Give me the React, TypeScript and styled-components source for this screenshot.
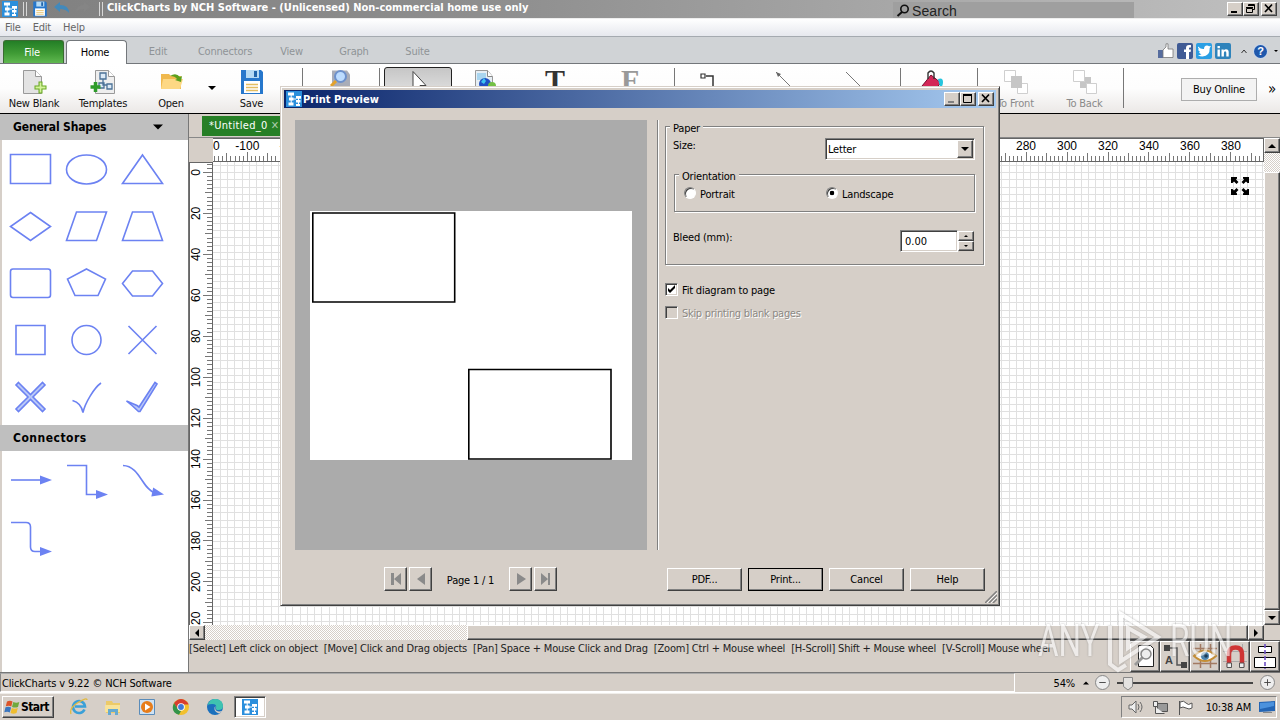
import React from "react";
import styled, { createGlobalStyle, css } from "styled-components";

const Color = {
  Face: "#d6cfc8",
  Shadow: "#808080",
  Dark: "#404040",
  Light: "#ffffff",
  Stroke: "#6c82f2",
  Green: "#267f26",
};

const raised = css`
  border: 1px solid;
  border-color: #fff #404040 #404040 #fff;
  box-shadow: inset -1px -1px 0 #808080;
  background: ${Color.Face};
`;

const sunken = css`
  border: 1px solid;
  border-color: #808080 #fff #fff #808080;
  box-shadow: inset 1px 1px 0 #404040, inset -1px -1px 0 #d6cfc8;
`;

const dither = css`
  background: repeating-conic-gradient(#fff 0 25%, #d6cfc8 0 50%) 0 0 / 2px 2px;
`;

/* ---------- ruler and canvas drawing ---------- */

const rulerX = (v: number) => 34.3 + (v + 100) * 2.0493;
const rulerY = (v: number) => 10.5 + v * 2.047;

const HorizontalRuler = () => {
  const ticks: React.ReactNode[] = [];
  for (let v = -116; v <= 395; v += 2) {
    const x = Math.floor(rulerX(v)) + 0.5;
    const top = v % 20 === 0 ? 14 : v % 10 === 0 ? 15 : 18;
    ticks.push(<path key={v} d={`M${x} ${top}V23`} stroke="#777" />);
  }
  const labels: React.ReactNode[] = [];
  for (let v = -100; v <= 380; v += 20) {
    if (v > -80 && v < 280) continue;
    labels.push(
      <text key={v} x={rulerX(v)} y={12} textAnchor="middle">
        {v}
      </text>
    );
  }
  return (
    <RulerSvg width="1051" height="24">
      {ticks}
      <text x="0" y="12">0</text>
      {labels}
      <path d="M0 .5H1051M0 23.5H1051M1050.5 0V24" stroke="#666" />
    </RulerSvg>
  );
};

const VerticalRuler = () => {
  const ticks: React.ReactNode[] = [];
  for (let v = -4; v <= 224; v += 2) {
    const y = Math.floor(rulerY(v)) + 0.5;
    const left = v % 20 === 0 ? 14 : v % 10 === 0 ? 16 : 18;
    ticks.push(<path key={v} d={`M${left} ${y}H23`} stroke="#777" />);
  }
  const labels: React.ReactNode[] = [];
  for (let v = 0; v <= 200; v += 20) {
    labels.push(
      <text key={v} transform={`translate(11 ${rulerY(v)}) rotate(-90)`} textAnchor="middle">
        {v}
      </text>
    );
  }
  return (
    <RulerSvg width="24" height="463">
      {ticks}
      {labels}
      <text transform="translate(11 463) rotate(-90)">20</text>
      <path d="M.5 0V463M23.5 0V463M0 .5H24" stroke="#666" />
    </RulerSvg>
  );
};

const CanvasGrid = () => {
  const lines: React.ReactNode[] = [];
  for (let i = 0; i < 146; i++) {
    const x = Math.round(7 + i * 7.235) + 0.5;
    lines.push(<path key={`v${i}`} d={`M${x} 0V463`} />);
  }
  for (let i = 0; i < 64; i++) {
    const y = Math.round(3 + i * 7.235) + 0.5;
    lines.push(<path key={`h${i}`} d={`M0 ${y}H1051`} />);
  }
  return (
    <svg width="1051" height="463" stroke="#e0e0e0">
      {lines}
      <g transform="translate(1017 14)" fill="#000" stroke="none">
        <path d="M1 1h6v1.500l-1 1 2.500 2.500-2 2L4 5.500 2.500 7H1z" />
        <path d="M19 1h-6v1.500l1 1L11.500 6l2 2L16 5.500 17.500 7H19z" />
        <path d="M1 19h6v-1.500l-1-1L8.500 14l-2-2L4 14.500 2.500 13H1z" />
        <path d="M19 19h-6v-1.500l1-1-2.500-2.500 2-2 2.500 2.500 1.500-1.500H19z" />
      </g>
    </svg>
  );
};

/* ---------- shape palette ---------- */

const arrow = (x: number, y: number, angle = 0) => (
  <path
    d="M0 0L-12 -4.500V4.500Z"
    fill={Color.Stroke}
    stroke="none"
    transform={`translate(${x} ${y}) rotate(${angle})`}
  />
);

const shapes: React.ReactNode[] = [
  <path d="M8.500 14.500h40v29h-40z" />,
  <ellipse cx="28.500" cy="29.500" rx="20" ry="14.500" />,
  <path d="M28.500 15L48.500 43.500h-40z" />,
  <path d="M28.500 15.500L48.500 29.500L28.500 43.500L8.500 29.500z" />,
  <path d="M18.500 15h30l-10 28.500h-30z" />,
  <path d="M18.500 15h20l10 28.500h-40z" />,
  <rect x="8.500" y="15" width="40" height="28.500" rx="2.500" />,
  <path d="M28.500 15L47.500 25L40 41.500H17L9.500 25z" />,
  <path d="M18.500 17h20l10 12.500l-10 12.500h-20l-10-12.500z" />,
  <path d="M14 14.500h29v29h-29z" />,
  <circle cx="28.500" cy="29" r="14.500" />,
  <path d="M14.500 15l28 28M42.500 15l-28 28" />,
  <path d="M16.500 14.500L28.500 26.500L40.500 14.500L43 17L31 29L43 41L40.500 43.500L28.500 31.500L16.500 43.500L14 41L26 29L14 17z" fill="#b9c8f8" />,
  <path d="M14.500 32.500C20 34 23.500 37 25 44.500C27 35 36 20 43 15" />,
  <path d="M12.500 33L23 37.500L25 39L41 14.500L43 16L26 43.500L24.500 43.500L18 37.500z" fill="#b9c8f8" />,
];

const connectors: React.ReactNode[] = [
  <g><path d="M9 29H40" />{arrow(50, 29)}</g>,
  <g><path d="M9 14.500h19.500v29h12" />{arrow(50, 43.500)}</g>,
  <g><path d="M9 14.500C26 15 28 38 41 42" />{arrow(50, 43.500, 12)}</g>,
  <g><path d="M9 14.500h15q4.500 0 4.500 4.500v20q0 4.500 4.500 4.500h8" />{arrow(50, 43.500)}</g>,
];

/* ---------- icons ---------- */

const AppLogo = ({ size = 16 }: { size?: number }) => (
  <svg width={size} height={size} viewBox="0 0 16 16">
    <rect width="16" height="16" fill="#2b8fdc" />
    <g fill="#fff">
      <path d="M2 1.500h6v3H2zM3 6.500h4.500v3H3zM2.500 11.500h5v3h-5zM10 5h5v2.800h-5zM10 9h4.500v2.500H10zM10 13h4v2h-4z" />
      <path d="M4.700 4h1v8h-1zM12 7h1v6h-1zM7 7.500h3v1H7z" />
    </g>
  </svg>
);

const Floppy = ({ size = 26 }: { size?: number }) => (
  <svg width={size} height={size} viewBox="0 0 26 26">
    <path d="M2 1h20l2 2v22H2z" fill="#2677cc" />
    <path d="M7 1h13v8H7z" fill="#b5daf4" />
    <path d="M15 2h3v6h-3z" fill="#2165aa" />
    <path d="M5 12h16v12H5z" fill="#fff" />
    <path d="M7 15.500h12M7 18.500h12M7 21.500h12" stroke="#e3bd62" strokeWidth="1.300" />
  </svg>
);

const NewBlankIcon = () => (
  <svg width="26" height="26" viewBox="0 0 26 26">
    <path d="M2.500 1.500h12l6 6v17h-18z" fill="#e3e3e3" stroke="#999" />
    <path d="M14.500 1.500v6h6" fill="#fff" stroke="#999" />
    <path d="M19.500 12.500v12M13.500 18.500h12" stroke="#69a823" strokeWidth="4" />
    <path d="M19.500 13.500v10M14.500 18.500h10" stroke="#d3f39a" strokeWidth="1.800" />
  </svg>
);

const TemplatesIcon = () => (
  <svg width="26" height="26" viewBox="0 0 26 26">
    <path d="M5.500 1.500h13l6 6v17h-19z" fill="#eee" stroke="#999" />
    <path d="M18.500 1.500v6h6" fill="#fff" stroke="#999" />
    <g fill="#dceaf6" stroke="#4b7197" strokeWidth="1.300">
      <path d="M10 4h6v6h-6zM9 14h5v5H9zM17 15h5v5h-5zM13 10v6h4" />
    </g>
    <path d="M5.500 13v10M.500 18h10" stroke="#2f9b2b" strokeWidth="3.500" />
  </svg>
);

const OpenIcon = () => (
  <svg width="26" height="26" viewBox="0 0 26 26">
    <path d="M3 5h8l2 2h10v13H3z" fill="#f0b94e" />
    <path d="M5 10h20l-3 10H3z" fill="#fdd884" />
    <path d="M12 7q6-4 10 1l2-1-1 6-6-2 2-1q-2-3-7-3z" fill="#5aa01e" />
  </svg>
);

const PreviewIcon = () => (
  <svg width="26" height="26" viewBox="0 0 26 26">
    <path d="M4 1.500h15l3 4v16H4z" fill="#a9adb8" />
    <circle cx="12.500" cy="7.500" r="5.500" fill="#bcdcff" stroke="#6d91cc" strokeWidth="2" />
    <path d="M3 17l5-5" stroke="#e3a22c" strokeWidth="3" />
  </svg>
);

const CursorIcon = () => (
  <svg width="26" height="26" viewBox="0 0 26 26">
    <path d="M8 1.500v19l4-4 3 7 3-2-3-6h6z" fill="#fff" stroke="#444" />
  </svg>
);

const ImageIcon = () => (
  <svg width="26" height="26" viewBox="0 0 26 26">
    <path d="M3.500 1.500h12l5 6v17h-17z" fill="#e6eef4" stroke="#999" />
    <path d="M15.500 1.500v6h5" fill="#fff" stroke="#888" />
    <path d="M5 4h9v7H5z" fill="#a9d5ef" />
    <circle cx="13" cy="15" r="6" fill="#1f4fc4" />
    <path d="M9 13l3-4 2 3-2 3z" fill="#3ec4f0" />
    <circle cx="20" cy="17" r="4" fill="#73c045" />
  </svg>
);

const ConnectorIcon = () => (
  <svg width="26" height="26" viewBox="0 0 26 26" fill="none" stroke="#333" strokeWidth="1.500">
    <path d="M2 5h4v4H2z" strokeWidth="1.200" />
    <path d="M7 7h7v12h6" />
  </svg>
);

const LineIcon = () => (
  <svg width="26" height="26" viewBox="0 0 26 26" stroke="#777" fill="#666">
    <path d="M4 3l18 18" />
    <path d="M4 3l5 2-3 3z" stroke="none" />
  </svg>
);

const FillIcon = () => (
  <svg width="26" height="26" viewBox="0 0 26 26">
    <path d="M2 17L11 6l10 8-8 8z" fill="#d32757" stroke="#771030" />
    <path d="M8 10V4q3-4 6 0v6" fill="none" stroke="#333" strokeWidth="1.400" />
    <path d="M18 10q5-2 5 3t-3 5z" fill="#25c5de" />
  </svg>
);

const StackIcon = ({ front = false }: { front?: boolean }) => (
  <svg width="26" height="26" viewBox="0 0 26 26">
    {!front && <path d="M8 8h11v11H8z" fill="#c6c6c6" />}
    <path d="M1.500 1.500h11v11h-11zM14.500 14.500h10v10h-10z" fill="#fff" stroke="#cfcfcf" />
    {front && <path d="M8 7h11v12H8z" fill="#c6c6c6" />}
  </svg>
);

const MinimizeGlyph = ({ color = "#000" }: { color?: string }) => (
  <svg width="12" height="11"><path d="M2 8h6v2H2z" fill={color} /></svg>
);
const MaximizeGlyph = () => (
  <svg width="12" height="11"><path d="M1.500 2v7.500h8V2zM1 1.500h9" fill="none" stroke="#000" /><path d="M1 1h9v2H1z" /></svg>
);
const RestoreGlyph = () => (
  <svg width="12" height="11" fill="none" stroke="#000">
    <path d="M3.500 3V1.500h6v5H8M3 2.500h7M1.500 5.500h6v4h-6zM1 4.500h7" />
  </svg>
);
const CloseGlyph = () => (
  <svg width="12" height="11"><path d="M2 1.500l7 7.500M9 1.500L2 9" stroke="#000" strokeWidth="1.700" /></svg>
);

const Triangle = ({ dir, size = 4, color = "#000" }: { dir: "up" | "down" | "left" | "right"; size?: number; color?: string }) => {
  const rotate = { down: 0, left: 90, up: 180, right: 270 }[dir];
  return (
    <svg width={size * 2} height={size * 2} viewBox="0 0 8 8">
      <path d="M0 2H8L4 6Z" fill={color} transform={`rotate(${rotate} 4 4)`} />
    </svg>
  );
};

const windowButtons = (dim: boolean, middle: React.ReactNode) => (
  <>
    <CaptionButton><MinimizeGlyph color={dim ? "#808080" : "#000"} /></CaptionButton>
    <CaptionButton>{middle}</CaptionButton>
    <CaptionButton $gap><CloseGlyph /></CaptionButton>
  </>
);

/* ---------- page sections ---------- */

const AppHeader = () => (
  <>
    <TitleBar>
      <TitleIcons>
        <AppLogo />
        <Grip />
        <Floppy size={16} />
        <svg width="41" height="16" viewBox="0 0 41 16">
          <path d="M1 6l6-5v3q9 0 9 8-3-4-9-4v3z" fill="#4289bb" />
          <path d="M37 6l-6-5v3q-8 0-8 7 2-3 8-3v3z" fill="#858585" />
        </svg>
        <Grip />
      </TitleIcons>
      <TitleText>ClickCharts by NCH Software - (Unlicensed) Non-commercial home use only</TitleText>
      <SearchBox>
        <svg width="14" height="14" viewBox="0 0 14 14" fill="none" stroke="#111" strokeWidth="1.600">
          <circle cx="8.500" cy="5" r="3.700" />
          <path d="M6 8L1.500 12" strokeWidth="2" />
        </svg>
        Search
      </SearchBox>
      <CaptionGroup>{windowButtons(false, <RestoreGlyph />)}</CaptionGroup>
    </TitleBar>
    <MenuBar>
      <span>File</span>
      <span>Edit</span>
      <span>Help</span>
    </MenuBar>
    <TabBar>
      <FileTab>File</FileTab>
      <HomeTab>Home</HomeTab>
      <PlainTab $w={62}>Edit</PlainTab>
      <PlainTab $w={72}>Connectors</PlainTab>
      <PlainTab $w={61}>View</PlainTab>
      <PlainTab $w={64}>Graph</PlainTab>
      <PlainTab $w={63}>Suite</PlainTab>
      <SocialRow>
        <svg width="17" height="16" viewBox="0 0 17 16">
          <path d="M1 7h5v8H1z" fill="#566c9e" />
          <path d="M6 7l3-3V.8h2V6h5v8.500H6z" fill="#fff" stroke="#777" strokeWidth=".8" />
        </svg>
        <Badge $bg="#3f5a94">
          <path d="M9 16V9H7V6.500h2V5q0-3 3-3h2v2.500h-1.300Q12 4.500 12 5.400v1.100h2L13.600 9H12v7z" fill="#fff" />
        </Badge>
        <Badge $bg="#2a9fe4">
          <path d="M2 3.500Q5 6.500 8 6q0-3.500 3-3.500 1.300 0 2 .8L15 3l-1.300 2Q14 13 6.500 13.500 4 13.500 2 12.300q2 0 3.500-1Q3.500 11 3 9h1.200Q2 8 2.200 6l1 .3Q1.500 5 2 3.500z" fill="#fff" />
        </Badge>
        <Badge $bg="#2f83bb">
          <path d="M2.500 6.500h2.400v7H2.500zM2.500 3h2.400v2.200H2.500zM6.500 6.500h2.200v1q1-1.300 2.400-1.200 2.600 0 2.600 3v4.200h-2.400V9.800q0-1.500-1.200-1.500T8.900 10v3.500H6.500z" fill="#fff" />
        </Badge>
        <Caret width="6" height="5"><path d="M.5 4L3 1L5.500 4" fill="none" stroke="#333" /></Caret>
        <HelpDot>?</HelpDot>
        <Triangle dir="down" size={2} />
      </SocialRow>
    </TabBar>
    <Toolbar>
      <Tool $w={68}><NewBlankIcon />New Blank</Tool>
      <Tool $w={70}><TemplatesIcon />Templates</Tool>
      <Tool $w={66}><OpenIcon />Open</Tool>
      <DropArrow><Triangle dir="down" size={4} /></DropArrow>
      <Tool $w={63}><Floppy />Save</Tool>
      <ToolSeparator $before={19} />
      <Tool $w={76}><PreviewIcon /></Tool>
      <ToolSeparator />
      <ActiveTool><CursorIcon /></ActiveTool>
      <Tool $w={66}><ImageIcon /></Tool>
      <Tool $w={74}><SerifGlyph>T</SerifGlyph></Tool>
      <Tool $w={76}><SerifGlyph $dim>F</SerifGlyph></Tool>
      <ToolSeparator $before={6} />
      <Tool $w={73}><ConnectorIcon /></Tool>
      <Tool $w={74}><LineIcon /></Tool>
      <Tool $w={66}><svg width="26" height="26"><path d="M4 3l18 18" stroke="#777" /></svg></Tool>
      <ToolSeparator $before={12} />
      <Tool $w={64}><FillIcon /></Tool>
      <ToolSeparator $before={12} />
      <Tool $w={75} $dim><StackIcon front />To Front</Tool>
      <Tool $w={63} $dim><StackIcon />To Back</Tool>
      <ToolSeparator $before={7} />
      <BuyButton>Buy Online</BuyButton>
      <More>»</More>
    </Toolbar>
  </>
);

const Palette = () => (
  <Sidebar>
    <SectionHead $spacing={-0.15}>
      General Shapes
      <Triangle dir="down" size={5} />
    </SectionHead>
    <ShapeGrid>
      {shapes.map((shape, i) => (
        <ShapeCell key={i} viewBox="0 0 56 57">{shape}</ShapeCell>
      ))}
    </ShapeGrid>
    <SectionHead $spacing={0.5}>Connectors</SectionHead>
    <ShapeGrid>
      {connectors.map((shape, i) => (
        <ShapeCell key={i} viewBox="0 0 56 57">{shape}</ShapeCell>
      ))}
    </ShapeGrid>
  </Sidebar>
);

const Workspace = () => (
  <Work>
    <DocTabs>
      <DocTab>*Untitled_0<CloseMark>✕</CloseMark></DocTab>
    </DocTabs>
    <CanvasArea>
      <Corner />
      <HorizontalRuler />
      <VerticalRuler />
      <CanvasGrid />
      <VScroll>
        <ScrollButton><Triangle dir="up" /></ScrollButton>
        <VGap />
        <VThumb />
        <ScrollButton><Triangle dir="down" /></ScrollButton>
      </VScroll>
      <HScroll>
        <ScrollButton><Triangle dir="left" /></ScrollButton>
        <HGap />
        <HThumb />
        <ScrollButton><Triangle dir="right" /></ScrollButton>
      </HScroll>
    </CanvasArea>
    <HintBar>
      <Hints>
        <span>[Select] Left click on object</span>
        <span>[Move] Click and Drag objects</span>
        <span>[Pan] Space + Mouse Click and Drag</span>
        <span>[Zoom] Ctrl + Mouse wheel</span>
        <span>[H-Scroll] Shift + Mouse wheel</span>
        <span>[V-Scroll] Mouse wheel</span>
      </Hints>
      <ViewButtons>
        <ViewButton>
          <svg width="26" height="26">
            <path d="M6.500 2.500h12l3 3v18h-15z" fill="#fff" stroke="#222" />
            <path d="M3 22l8-8" stroke="#999" strokeWidth="3" />
            <circle cx="14" cy="11" r="5" fill="#eee" stroke="#888" strokeWidth="1.500" />
          </svg>
        </ViewButton>
        <ViewButton>
          <svg width="26" height="26">
            <path d="M6 5h9v17h5" fill="none" stroke="#555" strokeWidth="1.500" />
            <path d="M2 2h6v6H2zM19 19h6v6h-6z" fill="#444" />
            <text x="3" y="21" fontSize="11" fontWeight="bold" fill="#444">A</text>
          </svg>
        </ViewButton>
        <ViewButton>
          <svg width="26" height="26">
            <path d="M8.500 1v24M18.500 1v24M1 5.500h24M1 20.500h24" stroke="#a27a62" strokeWidth="1.500" />
            <path d="M2 13q11-11 22 0-11 10-22 0z" fill="#fff" stroke="#c58e35" strokeWidth="2" />
            <circle cx="13" cy="13" r="4" fill="#4e85ad" />
            <circle cx="14" cy="13" r="1.800" fill="#1d3b56" />
          </svg>
        </ViewButton>
        <ViewButton>
          <svg width="26" height="26">
            <path d="M1 8.500h24M1 18.500h24M20.500 1v24" stroke="#aaa" />
            <path d="M7 24V11Q7 4.500 13.500 4.500t6.500 6.500v13" fill="none" stroke="#cf3434" strokeWidth="4.500" />
            <path d="M5 20h4.500v4.500H5zM17.500 20H22v4.500h-4.500z" fill="#eee" stroke="#555" />
          </svg>
        </ViewButton>
        <ViewButton>
          <svg width="26" height="26">
            <path d="M6.500 3.500h13v6h-13zM2.500 14.500h21v10h-21z" fill="#fff" stroke="#000" />
            <path d="M13 1v25" stroke="#6f50c4" strokeWidth="1.600" strokeDasharray="4 2" />
          </svg>
        </ViewButton>
      </ViewButtons>
    </HintBar>
  </Work>
);

const PrintDialog = () => (
  <Dialog>
    <DialogTitle>
      <AppLogo />
      <span>Print Preview</span>
      <CaptionGroup>{windowButtons(true, <MaximizeGlyph />)}</CaptionGroup>
    </DialogTitle>
    <DialogBody>
      <PreviewPane>
        <svg width="322" height="249">
          <path d="M0 0H322V249H0z" fill="#fff" />
          <path d="M2.800 2H144.700V91H2.800zM158.800 158.500H301V248H158.800z" fill="none" stroke="#000" strokeWidth="1.600" />
        </svg>
      </PreviewPane>
      <PaneDivider />
      <Settings>
        <PaperGroup>
          <Legend>Paper</Legend>
          <SizeRow>
            <span>Size:</span>
            <SelectBox>
              Letter
              <SelectArrow><Triangle dir="down" size={4} /></SelectArrow>
            </SelectBox>
          </SizeRow>
          <OrientationGroup>
            <Legend>Orientation</Legend>
            <RadioLabel><Radio />Portrait</RadioLabel>
            <RadioLabel><Radio $on />Landscape</RadioLabel>
          </OrientationGroup>
          <BleedRow>
            <span>Bleed (mm):</span>
            <Spinner>
              <SpinnerField>0.00</SpinnerField>
              <SpinnerButtons>
                <SpinnerButton><Triangle dir="up" size={2} /></SpinnerButton>
                <SpinnerButton><Triangle dir="down" size={2} /></SpinnerButton>
              </SpinnerButtons>
            </Spinner>
          </BleedRow>
        </PaperGroup>
        <CheckRow>
          <CheckBox>
            <svg width="9" height="9"><path d="M1 3v3l2 2 5-5V0L3 5z" /></svg>
          </CheckBox>
          Fit diagram to page
        </CheckRow>
        <CheckRow $off>
          <CheckBox $off />
          Skip printing blank pages
        </CheckRow>
      </Settings>
    </DialogBody>
    <DialogFooter>
      <Pager>
        <PageButton><svg width="14" height="14" fill="#8a8a8a"><path d="M2 1h3v12H2zM12 1v12L5 7z" /></svg></PageButton>
        <PageButton><svg width="14" height="14" fill="#8a8a8a"><path d="M11 1v12L3 7z" /></svg></PageButton>
        <PageText>Page 1 / 1</PageText>
        <PageButton><svg width="14" height="14" fill="#8a8a8a"><path d="M3 1v12l9-6z" /></svg></PageButton>
        <PageButton><svg width="14" height="14" fill="#8a8a8a"><path d="M2 1v12l7-6zM9 1h2v12H9z" /></svg></PageButton>
      </Pager>
      <Actions>
        <PushButton>PDF...</PushButton>
        <PushButton $primary>Print...</PushButton>
        <PushButton>Cancel</PushButton>
        <PushButton>Help</PushButton>
      </Actions>
    </DialogFooter>
    <ResizeGrip width="12" height="12" stroke="#808080">
      <path d="M0 12L12 0M4 12L12 4M8 12L12 8" strokeWidth="1.500" />
      <path d="M2 12L12 2M6 12L12 6" stroke="#fff" strokeWidth=".8" />
    </ResizeGrip>
  </Dialog>
);

const Footer = () => (
  <>
    <StatusBar>
      <StatusText>ClickCharts v 9.22 © NCH Software</StatusText>
      <ZoomBox>
        <ZoomValue>54%</ZoomValue>
        <Triangle dir="up" size={3} />
        <ZoomDial>
          <path d="M3.500 7h7" stroke="#444" />
        </ZoomDial>
        <svg width="138" height="16">
          <path d="M1 8h136" stroke="#444" strokeWidth="2" />
          <path d="M7.500 2.500h9v9l-4.500 3.500-4.500-3.500z" fill="#e4e2e0" stroke="#888" />
        </svg>
        <ZoomDial>
          <path d="M3.500 7h7M7 3.500v7" stroke="#444" />
        </ZoomDial>
      </ZoomBox>
    </StatusBar>
    <TaskBar>
      <StartButton>
        <svg width="16" height="15" viewBox="0 0 16 15">
          <path d="M3 1.500q3-1.500 5.500 0L7.300 6.500Q5 5 1.800 6.300z" fill="#dc5428" />
          <path d="M9.300 2q3 1.500 6 0l-1.300 5q-3 1.200-6 0z" fill="#71a93c" />
          <path d="M1.500 7.300q3-1.300 5.600.3L5.800 12.500Q3.500 11 .3 12.300z" fill="#3a76bf" />
          <path d="M7.800 8q3 1.300 6 0l-1.300 5q-3 1.300-6 0z" fill="#efbd2f" />
        </svg>
        Start
      </StartButton>
      <QuickLaunch>
        <svg width="18" height="18" viewBox="0 0 18 18">
          <path d="M14.500 11.500A6 6 0 1 1 15 8.500H5" fill="none" stroke="#3aa0d8" strokeWidth="2.600" />
          <path d="M1 16Q-1 10 8 4.500T17 2" fill="none" stroke="#e3ba3e" strokeWidth="1.300" />
        </svg>
        <svg width="18" height="18" viewBox="0 0 18 18">
          <path d="M2 3h6l1 2h7v10H2z" fill="#ecca68" />
          <path d="M1 7h15v7H1z" fill="#f8e39a" />
          <path d="M4 17v-6h10v6h-3v-3H7v3z" fill="#66aad0" />
        </svg>
        <svg width="18" height="18" viewBox="0 0 18 18">
          <path d="M1.500 1.500h15v15h-15z" fill="#cfe2f3" stroke="#5a8cba" />
          <circle cx="9" cy="9" r="6" fill="#e77d1b" />
          <path d="M7 5.500v7L12.500 9z" fill="#fff" />
        </svg>
        <svg width="18" height="18" viewBox="0 0 18 18">
          <circle cx="9" cy="9" r="8" fill="#f2c02d" />
          <path d="M2 5Q9-3 16 5L16.500 6.500H9L5.500 11z" fill="#d83d2f" />
          <path d="M2 5L6.500 12L9 13L7 16.800Q-2 14 2 5z" fill="#33944a" />
          <circle cx="9" cy="9" r="3.800" fill="#fff" />
          <circle cx="9" cy="9" r="2.900" fill="#3f79d8" />
        </svg>
        <svg width="18" height="18" viewBox="0 0 18 18">
          <circle cx="9" cy="9" r="8" fill="#1b70bd" />
          <path d="M1.500 7Q4 0 10 1q7 1 7 7 0 4-4.500 4-3 0-2.500-2Q11 6 6.500 6 3 6 1.500 7z" fill="#3fc3b0" />
          <path d="M9.500 8Q8 13 13 13.500q2 0 3.500-.8Q15 15 13 15.500 8 14 8.500 9.500z" fill="#d6cfc8" />
        </svg>
      </QuickLaunch>
      <ActiveTask><AppLogo /></ActiveTask>
      <Tray>
        <svg width="16" height="14" viewBox="0 0 16 14" fill="#eee" stroke="#666">
          <path d="M1 5h3l4-4v12L4 9H1z" />
          <path d="M10 4q2 3 0 6M12 2q4 5 0 10" fill="none" />
        </svg>
        <svg width="17" height="15" viewBox="0 0 17 15" fill="#eee" stroke="#555">
          <path d="M5.500 3.500h10v8h-10z" fill="#999" />
          <path d="M1.500 1.500h4v5h-4zM3.500 7v6.500h9" />
        </svg>
        <svg width="17" height="15" viewBox="0 0 17 15" fill="#fff" stroke="#555">
          <path d="M2.500 1v14M3 2q4-2 6 1t6 0v5q-3 2-6 0t-6 0z" />
        </svg>
        <Clock>10:38 AM</Clock>
        <svg width="16" height="13"><path d="M0 1l16-1v10l-16 1z" fill="#2465b4" /><path d="M1 2l14-1v4L1 8z" fill="#4c92dd" /><path d="M4 11.500h9" stroke="#888" /></svg>
      </Tray>
    </TaskBar>
  </>
);

export default function App() {
  return (
    <Screen>
      <GlobalStyle />
      <AppHeader />
      <Body>
        <Palette />
        <Workspace />
      </Body>
      <Footer />
      <PrintDialog />
      <Watermark>
        <MarkText>ANY</MarkText>
        <svg width="60" height="66" viewBox="0 0 60 66" fill="none" stroke="#fff" strokeWidth="4">
          <path d="M15 6L52 29L15 53z" />
          <path d="M4 18V56L12 62L20 57M22 20L38 29L22 40z" />
        </svg>
        <MarkText>RUN</MarkText>
      </Watermark>
    </Screen>
  );
}

/* ---------- styles ---------- */

const GlobalStyle = createGlobalStyle`
  body {
    margin: 0;
    overflow: hidden;
  }
  * {
    box-sizing: border-box;
  }
  svg {
    display: block;
    flex: none;
  }
`;

const Screen = styled.div`
  position: relative;
  display: flex;
  flex-direction: column;
  width: 1280px;
  height: 720px;
  overflow: hidden;
  background: ${Color.Face};
  color: #000;
  font: 11px/14px "DejaVu Sans Condensed", "DejaVu Sans", sans-serif;
  font-stretch: condensed;
  letter-spacing: -0.2px;
  white-space: nowrap;
`;

const TitleBar = styled.header`
  display: flex;
  align-items: center;
  flex: none;
  height: 18px;
  padding: 0 3px 0 2px;
  background: linear-gradient(90deg, #808080, #8f8f8f 40%, #c0c0c0);
`;

const TitleIcons = styled.div`
  display: flex;
  align-items: center;
  gap: 5px;
  width: 105px;
`;

const Grip = styled.i`
  flex: none;
  width: 4px;
  height: 14px;
  border: solid #d8d8d8;
  border-width: 0 1px;
`;

const TitleText = styled.h1`
  flex: 1;
  margin: 0 0 2px;
  color: #fff;
  font-size: 11px;
  line-height: 14px;
  letter-spacing: 0.01px;
`;

const SearchBox = styled.div`
  display: flex;
  align-items: center;
  gap: 2px;
  width: 241px;
  height: 17px;
  margin: 3px 93px 0 0;
  padding-left: 3px;
  background: #9f9f9f;
  color: #222;
  font: 14px/16px "Liberation Sans", Arial, sans-serif;
  letter-spacing: 0.1px;
`;

const CaptionGroup = styled.div`
  display: flex;
  margin-left: auto;
`;

const CaptionButton = styled.button<{ $gap?: boolean }>`
  ${raised}
  display: flex;
  width: 16px;
  height: 14px;
  padding: 0 1px;
  margin-left: ${({ $gap }) => ($gap ? 2 : 0)}px;
`;

const MenuBar = styled.nav`
  display: flex;
  flex: none;
  gap: 12px;
  height: 19px;
  padding: 2px 5px;
  border-top: 1px solid #eee;
  border-bottom: 1px solid #a5aab0;
  background: linear-gradient(#fff, #e6e8ee);
  color: #666;
`;

const TabBar = styled.nav`
  display: flex;
  flex: none;
  align-items: flex-end;
  height: 27px;
  border-bottom: 1px solid #73777b;
  background: #d0d3d6;
`;

const FileTab = styled.div`
  width: 61px;
  height: 23px;
  margin: 0 2px 0 3px;
  padding-right: 3px;
  border: 1px solid #3b6b32;
  border-bottom: 0;
  border-radius: 3px 3px 0 0;
  background: linear-gradient(#237e26, #3f9b35 55%, #60b850);
  color: #fff;
  line-height: 23px;
  text-align: center;
`;

const HomeTab = styled.div`
  width: 61px;
  height: 24px;
  margin-bottom: -1px;
  padding-right: 3px;
  border: 1px solid #73777b;
  border-bottom: 0;
  border-radius: 4px 4px 0 0;
  background: #fff;
  line-height: 23px;
  text-align: center;
`;

const PlainTab = styled.div<{ $w: number }>`
  width: ${({ $w }) => $w}px;
  height: 23px;
  color: #8f9397;
  line-height: 23px;
  text-align: center;
`;

const SocialRow = styled.div`
  display: flex;
  align-items: center;
  gap: 3px;
  height: 24px;
  margin-left: auto;
  padding-right: 2px;
`;

const BadgeSvg = styled.svg<{ $bg: string }>`
  border-radius: 2px;
  background: ${({ $bg }) => $bg};
`;

const Badge = ({ $bg, children }: { $bg: string; children: React.ReactNode }) => (
  <BadgeSvg $bg={$bg} width="16" height="16">{children}</BadgeSvg>
);

const Caret = styled.svg`
  margin-left: 7px;
`;

const HelpDot = styled.span`
  width: 13px;
  height: 13px;
  margin: 0 4px;
  border-radius: 50%;
  background: #1f58ac;
  box-shadow: 0 0 0 1px #c9d6ea;
  color: #fff;
  font: bold 11px/13px "Liberation Sans", Arial, sans-serif;
  text-align: center;
`;

const Toolbar = styled.div`
  display: flex;
  flex: none;
  height: 50px;
  border-bottom: 1px solid #000;
  background: linear-gradient(#fff, #fdfdfd 50%, #ebe8e6);
`;

const Tool = styled.div<{ $w: number; $dim?: boolean }>`
  display: flex;
  flex: none;
  flex-direction: column;
  align-items: center;
  width: ${({ $w }) => $w}px;
  padding-top: 5px;
  color: ${({ $dim }) => ($dim ? "#8a8a8a" : "#111")};
  line-height: 17px;
`;

const ActiveTool = styled.div`
  display: flex;
  justify-content: center;
  width: 68px;
  height: 44px;
  margin: 3px 0 0 4px;
  padding-top: 2px;
  border: 1px solid #222;
  border-radius: 3px;
  background: linear-gradient(#c6c6c6, #f2f2f2);
`;

const DropArrow = styled.div`
  width: 16px;
  padding: 20px 4px 0;
`;

const ToolSeparator = styled.i<{ $before?: number }>`
  width: 1px;
  height: 40px;
  margin: 4px 0 0 ${({ $before }) => $before ?? 0}px;
  background: #777;
`;

const SerifGlyph = styled.span<{ $dim?: boolean }>`
  color: ${({ $dim }) => ($dim ? "#999" : "#333")};
  font: bold 30px/22px "Liberation Serif", "Times New Roman", serif;
`;

const BuyButton = styled.button`
  width: 76px;
  height: 23px;
  margin: 14px 0 0 57px;
  padding: 0;
  border: 1px solid #adadad;
  background: #f3f3f3;
  color: #000;
  font: inherit;
  letter-spacing: inherit;
`;

const More = styled.span`
  margin: 17px 0 0 11px;
  font-size: 15px;
  line-height: 16px;
`;

const Body = styled.main`
  display: flex;
  flex: none;
  height: 558px;
`;

const Sidebar = styled.aside`
  flex: none;
  width: 189px;
  border-right: 1px solid #777;
  background: #fff;
  box-shadow: inset 2px 0 0 ${Color.Face};
`;

const SectionHead = styled.h2<{ $spacing: number }>`
  display: flex;
  align-items: center;
  justify-content: space-between;
  height: 26px;
  margin: 0;
  padding: 0 25px 0 13px;
  background: #bfbfbf;
  font-size: 12px;
  line-height: 14px;
  letter-spacing: ${({ $spacing }) => $spacing}px;
`;

const ShapeGrid = styled.div`
  display: grid;
  grid-template-columns: repeat(3, 56px);
  padding-left: 2px;
`;

const ShapeCell = styled.svg`
  width: 56px;
  height: 57px;
  fill: none;
  stroke: ${Color.Stroke};
  stroke-width: 1.6;
`;

const Work = styled.section`
  display: flex;
  flex: 1;
  flex-direction: column;
  min-width: 0;
`;

const DocTabs = styled.div`
  height: 24px;
  padding: 2px 0 0 13px;
  border-bottom: 1px solid #888;
`;

const DocTab = styled.div`
  display: flex;
  width: 88px;
  height: 20px;
  padding-left: 7px;
  background: ${Color.Green};
  color: #fff;
  letter-spacing: 0.3px;
  line-height: 20px;
`;

const CloseMark = styled.span`
  margin-left: 3px;
  color: #a9cba9;
`;

const CanvasArea = styled.div`
  display: grid;
  grid-template-columns: 24px 1051px 16px;
  grid-template-rows: 24px 463px 15px;
`;

const Corner = styled.div`
  background: ${Color.Face};
`;

const RulerSvg = styled.svg`
  background: #fff;
  font: 12px "Liberation Sans", Arial, sans-serif;
  letter-spacing: 0;

  & + svg + svg {
    background: #fff;
  }
`;

const VScroll = styled.div`
  ${dither}
  display: flex;
  grid-column: 3;
  grid-row: 1 / 3;
  flex-direction: column;
`;

const HScroll = styled.div`
  ${dither}
  display: flex;
  grid-column: 1 / 3;
`;

const ScrollButton = styled.button`
  ${raised}
  display: flex;
  flex: none;
  align-items: center;
  justify-content: center;
  width: 16px;
  height: 15px;
  padding: 0;
`;

const VGap = styled.div`
  height: 19px;
`;

const VThumb = styled.div`
  ${raised}
  flex: 1;
`;

const HGap = styled.div`
  width: 262px;
`;

const HThumb = styled.div`
  ${raised}
  flex: 1;
`;

const HintBar = styled.div`
  display: flex;
  justify-content: space-between;
  height: 32px;
`;

const Hints = styled.div`
  display: flex;
  gap: 6px;
  padding-top: 2px;
  color: #222;
  letter-spacing: -0.19px;
`;

const ViewButtons = styled.div`
  display: flex;
  border-top: 1px solid #555;
`;

const ViewButton = styled.button`
  ${raised}
  display: flex;
  width: 30px;
  height: 31px;
  padding: 1px;
`;

const StatusBar = styled.footer`
  display: flex;
  flex: none;
  height: 21px;
  border-top: 1px solid #777;
  border-bottom: 1px solid #fff;
`;

const StatusText = styled.div`
  width: 1015px;
  padding: 3px 1px;
  border: 1px solid;
  border-color: #aaa #fff #fff #888;
  letter-spacing: -0.15px;
`;

const ZoomBox = styled.div`
  display: flex;
  flex: 1;
  align-items: center;
  justify-content: flex-end;
  gap: 6px;
  padding-right: 5px;
`;

const ZoomValue = styled.span`
  margin: 2px 2px 0 0;
`;

const DialSvg = styled.svg`
  border: 1px solid #888;
  border-radius: 50%;
  background: #eee;
`;

const ZoomDial = ({ children }: { children: React.ReactNode }) => (
  <DialSvg width="15" height="15" viewBox="0 0 14 14">{children}</DialSvg>
);

const TaskBar = styled.footer`
  display: flex;
  flex: none;
  align-items: center;
  height: 27px;
  padding: 0 3px 0 2px;
  border-top: 1px solid #f0eeea;
`;

const StartButton = styled.button`
  ${raised}
  display: flex;
  align-items: center;
  gap: 1px;
  width: 52px;
  height: 22px;
  padding: 0 1px;
  color: #000;
  font: bold 12px/14px "DejaVu Sans Condensed", sans-serif;
  letter-spacing: -0.6px;
`;

const QuickLaunch = styled.div`
  display: flex;
  gap: 16px;
  margin: 0 10px 0 16px;
`;

const ActiveTask = styled.div`
  ${sunken}
  display: flex;
  align-items: center;
  justify-content: center;
  width: 32px;
  height: 22px;
  background: #fff;
`;

const Tray = styled.div`
  display: flex;
  align-items: center;
  gap: 8px;
  width: 156px;
  height: 22px;
  margin-left: auto;
  padding: 0 1px 0 6px;
  border: 1px solid;
  border-color: #808080 #fff #fff #808080;
`;

const Clock = styled.span`
  margin: 1px 0 0 auto;
`;

const Dialog = styled.div`
  position: absolute;
  top: 86px;
  left: 280px;
  width: 720px;
  height: 520px;
  padding: 2px;
  border: 1px solid;
  border-color: ${Color.Face} #404040 #404040 ${Color.Face};
  background: ${Color.Face};
  box-shadow: inset 1px 1px 0 #fff, inset -1px -1px 0 #808080;
`;

const DialogTitle = styled.div`
  display: flex;
  align-items: center;
  height: 18px;
  margin: 1px 1px 0;
  padding: 0 2px;
  background: linear-gradient(90deg, #0a246a, #a6caf0);
  color: #fff;
  font-weight: bold;
  letter-spacing: 0.05px;

  > span {
    margin: 1px 0 0 1px;
  }
`;

const DialogBody = styled.div`
  display: flex;
  padding: 12px 12px 0;
`;

const PreviewPane = styled.div`
  width: 352px;
  height: 430px;
  padding: 91px 15px;
  background: #ababab;
`;

const PaneDivider = styled.i`
  width: 2px;
  margin: 0 6px 0 10px;
  border: solid;
  border-width: 0 1px;
  border-color: #808080 #fff #fff #808080;
`;

const Settings = styled.div`
  padding-top: 6px;
`;

const groupFrame = css`
  position: relative;
  border: 1px solid #808080;
  box-shadow: inset 1px 1px 0 #fff, 1px 1px 0 #fff;
`;

const PaperGroup = styled.div`
  ${groupFrame}
  width: 319px;
  height: 139px;
  padding: 11px 8px 0;
`;

/* sits on top of the frame line of its group */
const Legend = styled.span`
  position: absolute;
  top: -5px;
  left: 4px;
  padding: 0 3px;
  background: ${Color.Face};
`;

const SizeRow = styled.div`
  display: flex;
  justify-content: space-between;

  > span {
    margin-left: -1px;
    line-height: 16px;
  }
`;

const SelectBox = styled.div`
  ${sunken}
  display: flex;
  align-items: center;
  justify-content: space-between;
  width: 150px;
  height: 22px;
  padding: 1px 1px 0 2px;
  background: #fff;
`;

const SelectArrow = styled.span`
  ${raised}
  display: flex;
  align-items: center;
  justify-content: center;
  width: 16px;
  height: 18px;
  margin-top: -1px;
`;

const OrientationGroup = styled.div`
  ${groupFrame}
  display: grid;
  grid-template-columns: 142px 1fr;
  width: 301px;
  height: 38px;
  margin-top: 14px;
  padding: 12px 0 0 9px;
`;

const RadioLabel = styled.label`
  display: flex;
  gap: 4px;
  height: 14px;
  line-height: 16px;
`;

const Radio = styled.i<{ $on?: boolean }>`
  width: 12px;
  height: 12px;
  border: 1px solid;
  border-color: #808080 #fff #fff #808080;
  border-radius: 50%;
  background: ${({ $on }) => ($on ? "radial-gradient(circle, #000 0 2px, #fff 2.6px)" : "#fff")};
  box-shadow: inset 1px 1px 0 #404040;
`;

const BleedRow = styled.div`
  display: flex;
  align-items: center;
  justify-content: space-between;
  margin-top: 18px;

  > span {
    margin: 0 0 6px -1px;
  }
`;

const Spinner = styled.div`
  display: flex;
  width: 75px;
  height: 22px;
`;

const SpinnerField = styled.div`
  ${sunken}
  width: 58px;
  padding: 4px 4px 0;
  background: #fff;
  letter-spacing: 0;
  line-height: 13px;
`;

const SpinnerButtons = styled.div`
  display: flex;
  flex-direction: column;
  width: 16px;
  padding: 1px 0;
`;

const SpinnerButton = styled.button`
  ${raised}
  display: flex;
  flex: 1;
  align-items: center;
  justify-content: center;
  padding: 0;
`;

const CheckRow = styled.label<{ $off?: boolean }>`
  display: flex;
  gap: 4px;
  height: 23px;
  margin-top: ${({ $off }) => ($off ? 0 : 18)}px;
  color: ${({ $off }) => ($off ? "#8c8984" : "#000")};
  letter-spacing: ${({ $off }) => ($off ? -0.3 : -0.2)}px;
  line-height: 16px;
  text-shadow: ${({ $off }) => ($off ? "1px 1px 0 #fff" : "none")};
`;

const CheckBox = styled.i<{ $off?: boolean }>`
  ${sunken}
  width: 13px;
  height: 13px;
  padding: 1px;
  background: ${({ $off }) => ($off ? Color.Face : "#fff")};
`;

const DialogFooter = styled.div`
  display: flex;
  padding: 17px 12px 0 101px;
`;

const Pager = styled.div`
  display: flex;
  gap: 2px;
`;

const PageButton = styled.button`
  ${raised}
  display: flex;
  align-items: center;
  justify-content: center;
  width: 23px;
  height: 24px;
  padding: 0;
`;

const PageText = styled.span`
  width: 73px;
  line-height: 27px;
  text-align: center;
`;

const Actions = styled.div`
  display: flex;
  gap: 6px;
  margin: 1px 0 0 auto;
`;

const PushButton = styled.button<{ $primary?: boolean }>`
  ${raised}
  width: 75px;
  height: 23px;
  padding: 0;
  color: #000;
  font: inherit;
  letter-spacing: inherit;
  outline: ${({ $primary }) => ($primary ? "1px solid #000" : "none")};
  outline-offset: -1px;
`;

const ResizeGrip = styled.svg`
  position: absolute;
  right: 2px;
  bottom: 2px;
`;

const Watermark = styled.div`
  position: absolute;
  top: 608px;
  left: 1038px;
  display: flex;
  align-items: center;
  gap: 4px;
  opacity: 0.6;
  filter: drop-shadow(0 0 1px #888);
`;

const MarkText = styled.span`
  width: 64px;
  color: #fff;
  font: 400 45px/66px Roboto, "Open Sans", sans-serif;
  letter-spacing: 0;
  transform: scaleX(0.7);
  transform-origin: left;
`;
